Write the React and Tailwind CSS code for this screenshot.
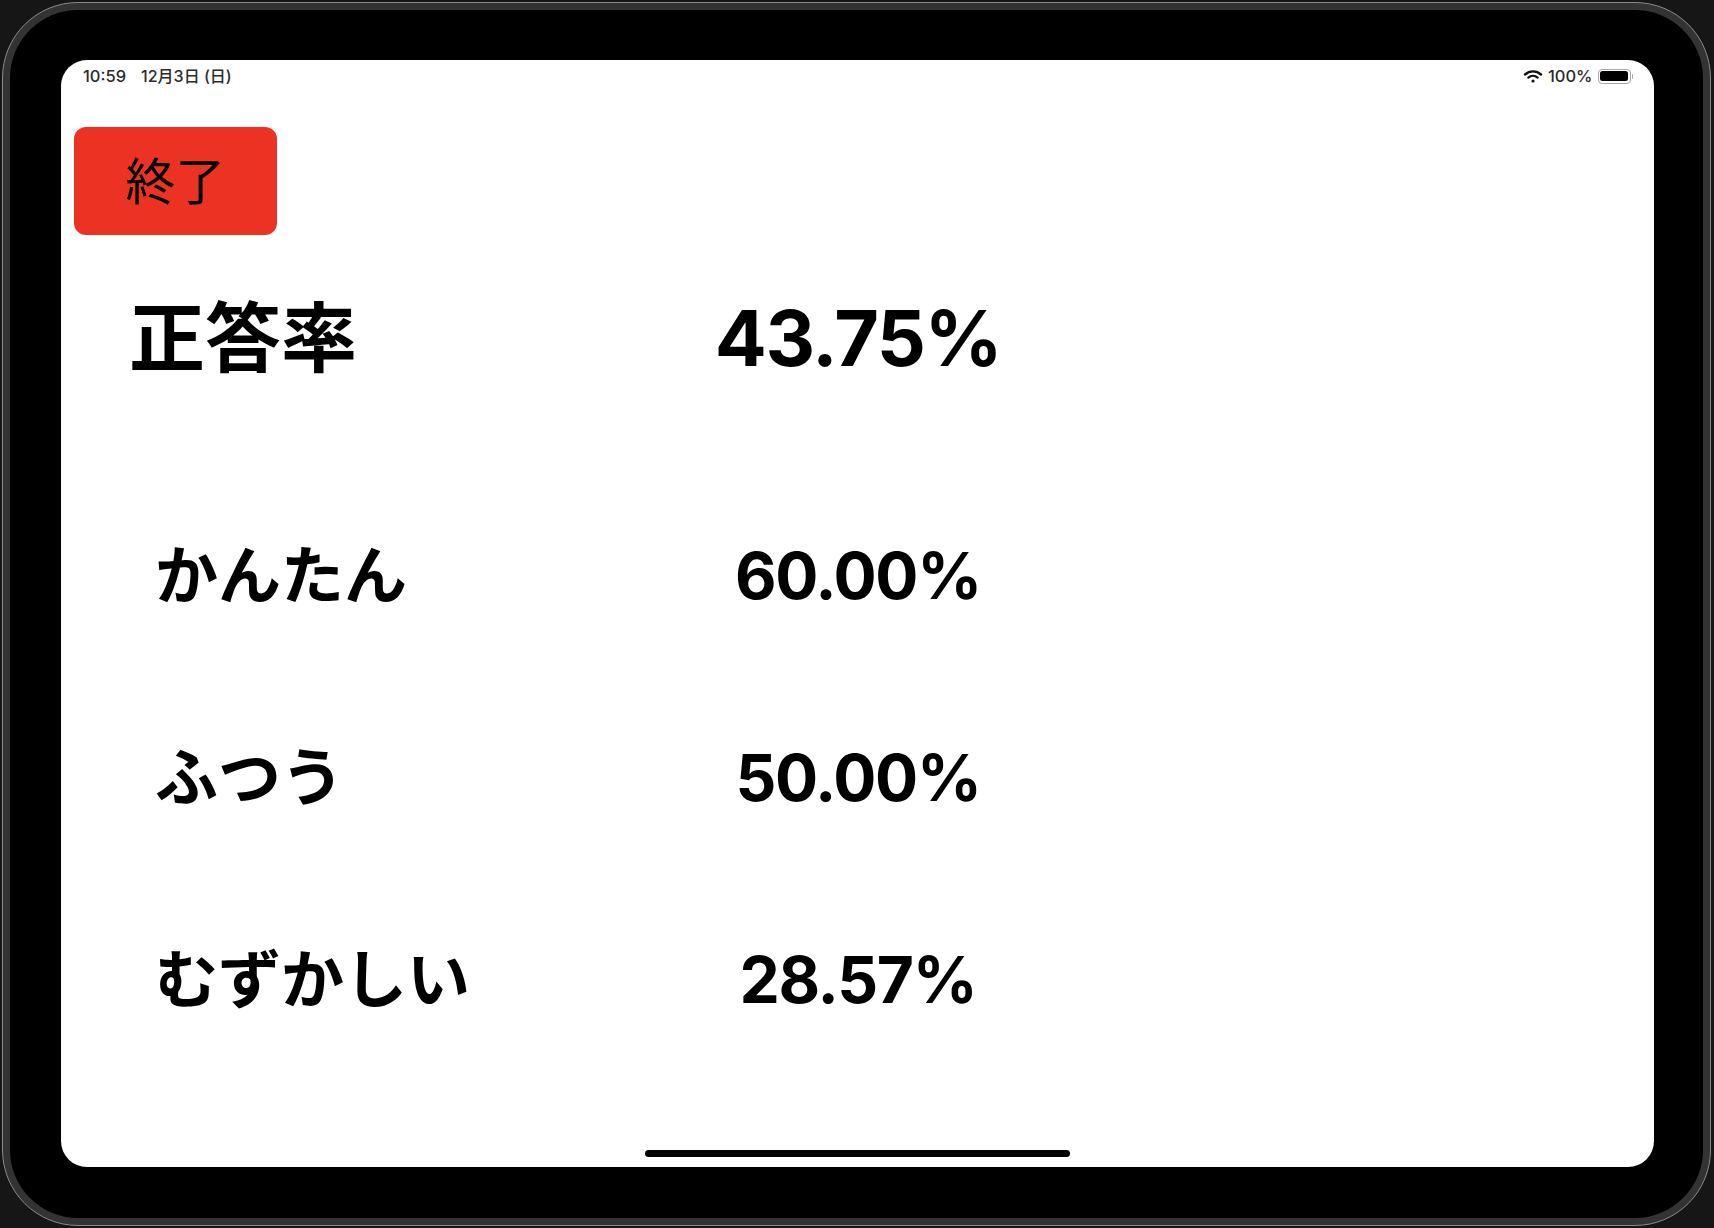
import React from 'react';

const jp = "font-['Inter','Noto_Sans_CJK_JP',sans-serif]";

const rows = [
  { label: 'かんたん', value: '60.00%' },
  { label: 'ふつう', value: '50.00%' },
  { label: 'むずかしい', value: '28.57%' },
];

function StatusBar() {
  return (
    <div className="flex items-center justify-between h-[32px] pl-[22px] pr-[21px] text-[16.5px] text-[#2a2a2a] font-medium">
      <div className="flex items-center gap-[15px]">
        <span>10:59</span>
        <span className="text-[16px]">12月3日 (日)</span>
      </div>
      <div className="flex items-center gap-[5px]">
        <svg width="20" height="16" viewBox="0 0 20 16" fill="none" stroke="#111" strokeLinecap="round">
          <path d="M2 6.5C6.5 2.3 13.5 2.3 18 6.5" strokeWidth="2.4" />
          <path d="M5.3 9.6C8 7.4 12 7.4 14.7 9.6" strokeWidth="2.2" />
          <circle cx="10" cy="13" r="1.6" fill="#111" stroke="none" />
        </svg>
        <span>100%</span>
        <div className="flex items-center">
          <div className="w-[33px] h-[15px] rounded-[4px] border border-[#a8a8a8] p-[1.5px]">
            <div className="w-full h-full rounded-[2.5px] bg-black" />
          </div>
          <div className="w-[1.5px] h-[5px] bg-[#a8a8a8] rounded-r-full ml-[1px]" />
        </div>
      </div>
    </div>
  );
}

export default function App() {
  return (
    <div className={`w-[1714px] h-[1228px] bg-[#161616] overflow-hidden pt-[2px] pl-[2px] pr-[3px] pb-[2px] ${jp}`}>
      <div className="h-full rounded-[76px] border border-[#8a8a8a] bg-[#333] p-[7px]">
        <div className="h-full rounded-[68px] bg-black pt-[50px] pl-[51px] pr-[49px] pb-[49px]">
          <div className="h-[1107px] rounded-[26px] bg-white overflow-hidden text-black relative">
            <StatusBar />
            <button className="block ml-[13px] mt-[35px] w-[203px] h-[108px] rounded-[12px] bg-[#ec3323] text-[50px] leading-none pt-[2px]">
              終了
            </button>
            <div className="grid grid-cols-[489px_480px] items-center h-[200px] pl-[68px] mt-[3px]">
              <div className="text-[76px] font-bold leading-none">正答率</div>
              <div className="text-[77px] font-bold leading-none text-center tracking-[-1.5px]">43.75%</div>
            </div>
            <div className="mt-[35px]">
              {rows.map((r) => (
                <div key={r.label} className="grid grid-cols-[463px_480px] items-center h-[202px] pl-[94px]">
                  <div className="text-[63px] font-bold leading-none pt-[3px]">{r.label}</div>
                  <div className="text-[64px] font-bold leading-none text-center tracking-[-1.3px] pt-[3px]">{r.value}</div>
                </div>
              ))}
            </div>
            <div className="absolute bottom-[10px] left-[584px] w-[425px] h-[7px] rounded-full bg-black" />
          </div>
        </div>
      </div>
    </div>
  );
}
